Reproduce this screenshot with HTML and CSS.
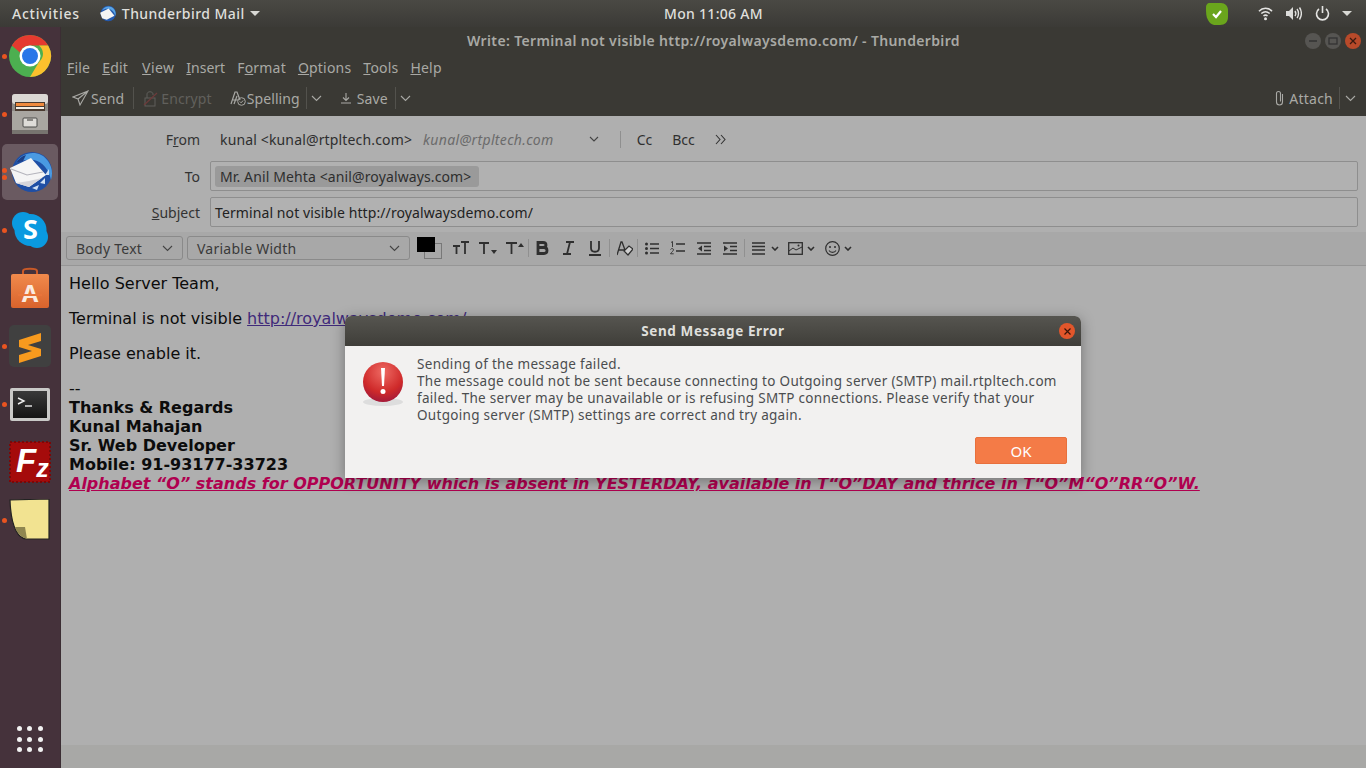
FILE: index.html
```html
<!DOCTYPE html>
<html lang="en">
<head>
<meta charset="utf-8">
<title>Write: Terminal not visible</title>
<link rel="stylesheet" href="styles.css">
</head>
<body>
<header class="topbar">
  <span class="activities">Activities</span>
  <span class="appmenu">
    <svg class="tb-small" viewBox="0 0 44 44" width="17" height="17"><circle cx="24" cy="22" r="20" fill="#2459ad"/><path d="M8 14C14 2 32 0 40 12c3 5 4 10 2 16-2-9-8-16-17-18-6-1-12 0-17 4z" fill="#5aa5e6"/><path d="M3 20l22-11 15 19-20 10-12-4z" fill="#f4f4f4"/></svg>
    Thunderbird Mail <i class="caret"></i>
  </span>
  <span class="clock">Mon 11:06 AM</span>
  <span class="tray">
    <svg class="shield" width="22" height="22" viewBox="0 0 22 22"><path d="M4 0h11c4 0 7 3 7 7v7c0 5-3 8-8 8-7 1-10-1-12-5-2-3-2-8-2-12 0-3 1-5 4-5z" fill="#6aa51c"/><path d="M7 11l3 3 5-6" fill="none" stroke="#fff" stroke-width="2.2"/></svg>
    <svg class="wifi" width="15" height="15" viewBox="0 0 16 15"><g fill="none" stroke="#e4e4e2" stroke-width="1.6"><path d="M1 5c4-4 10-4 14 0"/><path d="M3.5 7.5c3-2.500 6-2.500 9 0"/><path d="M5.800 10c1.500-1 3-1 4.400 0"/></g><circle cx="8" cy="13" r="1.600" fill="#e4e4e2"/></svg>
    <svg class="vol" width="16" height="15" viewBox="0 0 16 15"><path d="M0 5h3l4-4v13l-4-4H0z" fill="#dcdcda"/><g fill="none" stroke="#e4e4e2" stroke-width="1.400"><path d="M9 5c1 1.500 1 3.500 0 5"/><path d="M11 3c2 2.500 2 6.500 0 9"/><path d="M13.500 1.500c2.500 3.500 2.500 8.500 0 12"/></g></svg>
    <svg class="pow" width="15" height="15" viewBox="0 0 15 15"><path d="M4 3a6 6 0 1 0 7 0" fill="none" stroke="#e4e4e2" stroke-width="1.600"/><path d="M7.500 0v7" stroke="#e4e4e2" stroke-width="1.600"/></svg>
    <i class="caret tray-caret"></i>
  </span>
</header>
<div class="desktop">
  <nav class="dock">
    <div class="dock-item"><i class="pip"></i>
      <svg width="44" height="44" viewBox="0 0 44 44"><circle cx="22" cy="22" r="21" fill="#4caf50"/><path d="M22 1a21 21 0 0 1 18.200 10.500H22a10.500 10.500 0 0 0-10 7L3.800 11.500A21 21 0 0 1 22 1z" fill="#e53a2f"/><path d="M40.200 11.500A21 21 0 0 1 22 43l9-15a10.500 10.500 0 0 0 0-16.500z" fill="#fbc02d"/><circle cx="22" cy="22" r="10.500" fill="#fff"/><circle cx="22" cy="22" r="8" fill="#2a76e8"/></svg>
    </div>
    <div class="dock-item"><i class="pip"></i>
      <svg width="38" height="42" viewBox="0 0 38 42"><rect x="1" y="1" width="36" height="40" rx="3" fill="#8d8a86"/><rect x="1" y="1" width="36" height="10" rx="3" fill="#dbd8d4"/><rect x="4" y="9" width="30" height="9" fill="#4a3a30"/><rect x="5" y="10" width="28" height="3" fill="#ef8a3e"/><rect x="5" y="14" width="28" height="2" fill="#f5f0e8"/><rect x="1" y="18" width="36" height="23" fill="#a9a6a1"/><rect x="1" y="37" width="36" height="4" fill="#77746f"/><rect x="12" y="25" width="14" height="9" rx="1" fill="#dedcd8" stroke="#4a4a48"/><rect x="16" y="25" width="6" height="3" fill="#8a8884"/></svg>
    </div>
    <div class="dock-item active"><i class="pip pip-a"></i><i class="pip pip-b"></i>
      <svg width="46" height="44" viewBox="0 0 46 44"><circle cx="25" cy="22" r="20" fill="#1f4fa5"/><path d="M9 13C15 1 33-1 41 11c4 6 5 12 3 19-2-10-8-18-17-20-6-1-13 0-18 3z" fill="#4a9ae2"/><path d="M9 13c2-4 6-7 10-8l-3 6z" fill="#1c3f86"/><path d="M25 38l7-3-2 5zM33 33l5-5 0 6zM38 25l4-6 0 6z" fill="#cfe0f4"/><path d="M3 18l21-10 15 17-17 12-13-4z" fill="#f5f5f5"/><path d="M4 19l16 6 16-3" fill="none" stroke="#b4b4bc" stroke-width="1.200"/><path d="M9 33l13 4 13-9-13 3z" fill="#d5d5da"/></svg>
    </div>
    <div class="dock-item"><i class="pip"></i>
      <svg width="38" height="38" viewBox="0 0 38 38"><circle cx="12" cy="12" r="11" fill="#0a9ae0"/><circle cx="26" cy="26" r="11" fill="#0a9ae0"/><circle cx="19.500" cy="19" r="16" fill="#0a9ae0"/><text class="skype-s" x="19.500" y="28" text-anchor="middle">S</text></svg>
    </div>
    <div class="dock-item">
      <svg width="38" height="44" viewBox="0 0 38 44"><defs><linearGradient id="bag" x1="0" y1="0" x2="0" y2="1"><stop offset="0" stop-color="#f08a4c"/><stop offset="1" stop-color="#d9632c"/></linearGradient></defs><path d="M12 9V5c0-3 14-3 14 0v4" fill="none" stroke="#c95a28" stroke-width="2"/><rect x="0" y="8" width="38" height="34" rx="2" fill="url(#bag)"/><text class="store-a" x="19" y="36" text-anchor="middle">A</text><rect x="7" y="28" width="24" height="2" fill="#e9743a"/></svg>
    </div>
    <div class="dock-item"><i class="pip"></i>
      <svg width="42" height="42" viewBox="0 0 42 42"><rect width="42" height="42" rx="5" fill="#404040"/><path d="M10 15l22-7v8l-13 4 13 4v7l-22 7v-8l13-4-13-4z" fill="#f79a1e"/></svg>
    </div>
    <div class="dock-item"><i class="pip"></i>
      <svg width="40" height="33" viewBox="0 0 40 33"><defs><linearGradient id="term" x1="0" y1="0" x2="0" y2="1"><stop offset="0" stop-color="#3a3a3a"/><stop offset="1" stop-color="#141414"/></linearGradient></defs><rect width="40" height="33" rx="2" fill="#c9c9c7"/><rect x="3" y="3" width="34" height="27" fill="url(#term)"/><path d="M8 10l6 3-6 3" fill="none" stroke="#eee" stroke-width="1.400"/><path d="M15 18h7" stroke="#eee" stroke-width="1.400"/></svg>
    </div>
    <div class="dock-item">
      <svg width="42" height="42" viewBox="0 0 42 42"><rect x="1" y="1" width="40" height="40" fill="#a50b0b" stroke="#7a0808" stroke-width="2" stroke-dasharray="2 2"/><text class="fz-f" x="7" y="31">F<tspan class="fz-z" dy="5">z</tspan></text></svg>
    </div>
    <div class="dock-item"><i class="pip"></i>
      <svg width="42" height="42" viewBox="0 0 42 42"><path d="M1 1l39-1v40H18C10 40 2 30 1 1z" fill="#f2e391" stroke="#222" stroke-width="1.200"/><path d="M6 28l10 0 2 12C12 38 8 34 6 28z" fill="#8f8650"/></svg>
    </div>
    <div class="apps">
      <i></i><i></i><i></i><i></i><i></i><i></i><i></i><i></i><i></i>
    </div>
  </nav>
  <main class="window">
    <div class="titlebar">
      <span class="wintitle">Write: Terminal not visible http://royalwaysdemo.com/ - Thunderbird</span>
      <span class="winbtns">
        <i class="wb"><svg width="10" height="10" viewBox="0 0 10 10"><path d="M1 5h8" stroke="#333" stroke-width="1.500"/></svg></i>
        <i class="wb"><svg width="10" height="10" viewBox="0 0 10 10"><rect x="1" y="2" width="8" height="6" fill="none" stroke="#333" stroke-width="1.300"/></svg></i>
        <i class="wb wb-close"><svg width="10" height="10" viewBox="0 0 10 10"><path d="M2 2l6 6M8 2l-6 6" stroke="#3a1a10" stroke-width="1.300"/></svg></i>
      </span>
    </div>
    <div class="menubar">
      <span><u>F</u>ile</span><span><u>E</u>dit</span><span class="m-view"><u>V</u>iew</span><span class="m-insert"><u>I</u>nsert</span><span>F<u>o</u>rmat</span><span><u>O</u>ptions</span><span><u>T</u>ools</span><span><u>H</u>elp</span>
    </div>
    <div class="toolbar">
      <svg class="ti-send" width="17" height="16" viewBox="0 0 17 16"><path d="M16 1L1 7l5 2 2 6zM16 1L6 9" fill="none" stroke="#a9a9a5" stroke-width="1.100"/></svg>
      <span class="tl tl-send">Send</span><i class="tsep tsep-1"></i>
      <svg class="ti-enc" width="15" height="17" viewBox="0 0 15 17"><rect x="2" y="8" width="10" height="8" fill="none" stroke="#5f5e5a"/><path d="M4 8V4c0-3 6-3 6 0v1" fill="none" stroke="#5f5e5a"/><path d="M1 15L14 3" stroke="#6d3b3b" stroke-width="1.200"/></svg>
      <span class="tl tl-off">Encrypt</span>
      <svg class="ti-spell" width="16" height="16" viewBox="0 0 16 16"><path d="M1 14L5 2h2l3 8M3 10h5M4 14l3-8" fill="none" stroke="#a9a9a5" stroke-width="1.200"/><circle cx="11.500" cy="11.500" r="3.800" fill="none" stroke="#a9a9a5"/><path d="M9.800 11.500l1.300 1.300 2-2.300" fill="none" stroke="#a9a9a5"/></svg>
      <span class="tl tl-spell">Spelling</span><i class="tsep tsep-2"></i>
      <svg class="chev chev-1" width="11" height="7" viewBox="0 0 11 7"><path d="M1 1l4.500 4.500L10 1" fill="none" stroke="#a9a9a5" stroke-width="1.100"/></svg>
      <svg class="ti-save" width="12" height="12" viewBox="0 0 12 12"><path d="M6 1v7M3 5.500L6 8.500l3-3M1 11h10" fill="none" stroke="#a9a9a5" stroke-width="1.100"/></svg>
      <span class="tl tl-save">Save</span><i class="tsep tsep-3"></i>
      <svg class="chev chev-2" width="11" height="7" viewBox="0 0 11 7"><path d="M1 1l4.500 4.500L10 1" fill="none" stroke="#a9a9a5" stroke-width="1.100"/></svg>
      <svg class="ti-clip" width="9" height="16" viewBox="0 0 9 16"><path d="M7.500 4v8a3 3 0 0 1-6 0V3.500a2 2 0 0 1 4 0V11.500" fill="none" stroke="#a9a9a5" stroke-width="1.100"/></svg>
      <span class="tl tl-attach">Attach</span><i class="tsep tsep-4"></i>
      <svg class="chev chev-3" width="11" height="7" viewBox="0 0 11 7"><path d="M1 1l4.500 4.500L10 1" fill="none" stroke="#a9a9a5" stroke-width="1.100"/></svg>
    </div>
    <section class="fields">
      <div class="row row-from">
        <label class="lbl">F<u>r</u>om</label>
        <span class="from-acc">kunal &lt;kunal@rtpltech.com&gt;</span>
        <em class="from-ph">kunal@rtpltech.com</em>
        <svg class="chev from-chev" width="10" height="6" viewBox="0 0 10 6"><path d="M1 1l4 4 4-4" fill="none" stroke="#444" stroke-width="1.100"/></svg>
        <i class="fsep"></i>
        <span class="cc">Cc</span>
        <span class="bcc">Bcc</span>
        <svg class="more" width="11" height="11" viewBox="0 0 11 11"><path d="M1 1l4 4.500L1 10M6 1l4 4.500L6 10" fill="none" stroke="#333" stroke-width="1.100"/></svg>
      </div>
      <div class="row row-to">
        <label class="lbl">To</label>
        <div class="input"><span class="pill">Mr. Anil Mehta &lt;anil@royalways.com&gt;</span></div>
      </div>
      <div class="row row-subj">
        <label class="lbl"><u>S</u>ubject</label>
        <div class="input input-subj">Terminal not visible http://royalwaysdemo.com/</div>
      </div>
    </section>
    <div class="formatbar">
      <div class="sel sel-para">Body Text<svg width="11" height="7" viewBox="0 0 11 7"><path d="M1 1l4.500 4.500L10 1" fill="none" stroke="#444" stroke-width="1.100"/></svg></div>
      <div class="sel sel-font">Variable Width<svg width="11" height="7" viewBox="0 0 11 7"><path d="M1 1l4.500 4.500L10 1" fill="none" stroke="#444" stroke-width="1.100"/></svg></div>
      <div class="colors"><i class="bg"></i><i class="fg"></i></div>
      <svg class="fi fi-size" width="17" height="14" viewBox="0 0 17 14"><path d="M1 5h7M4.500 5v8M9 1h8M13 1v12" stroke="#2f2f2f" stroke-width="1.800" fill="none"/></svg>
      <svg class="fi fi-dn" width="18" height="14" viewBox="0 0 18 14"><path d="M0 2h10M5 2v11" stroke="#2f2f2f" stroke-width="1.800" fill="none"/><path d="M12 9h6l-3 4z" fill="#2f2f2f"/></svg>
      <svg class="fi fi-up" width="18" height="14" viewBox="0 0 18 14"><path d="M0 2h11M5.500 2v11" stroke="#2f2f2f" stroke-width="1.800" fill="none"/><path d="M12 6h6l-3-4z" fill="#2f2f2f"/></svg>
      <i class="fsep2 s1"></i>
      <svg class="fi fi-b" width="13" height="14" viewBox="0 0 13 14"><path d="M2 1.500h5c4 0 4 5 0 5H2zM2 6.500h6c4 0 4 6 0 6H2z" fill="none" stroke="#2f2f2f" stroke-width="2.800"/></svg>
      <svg class="fi fi-i" width="11" height="14" viewBox="0 0 11 14"><path d="M3 1h8M0 13h8M7 1L4 13" stroke="#2f2f2f" stroke-width="1.800" fill="none"/></svg>
      <svg class="fi fi-u" width="12" height="15" viewBox="0 0 12 15"><path d="M2 0v7c0 5 8 5 8 0V0M0 14h12" stroke="#2f2f2f" stroke-width="1.800" fill="none"/></svg>
      <i class="fsep2 s2"></i>
      <svg class="fi fi-e" width="16" height="15" viewBox="0 0 16 15"><path d="M0 14L4 1h1l3 8M2 9h6" stroke="#2f2f2f" stroke-width="1.300" fill="none"/><path d="M7 10l5-5 4 3-5 6z" fill="#cfcfcf" stroke="#2f2f2f" stroke-width="1.200"/></svg>
      <i class="fsep2 s3"></i>
      <svg class="fi fi-ul" width="14" height="13" viewBox="0 0 14 13"><circle cx="1.500" cy="2" r="1.500" fill="#2f2f2f"/><circle cx="1.500" cy="6.500" r="1.500" fill="#2f2f2f"/><circle cx="1.500" cy="11" r="1.500" fill="#2f2f2f"/><path d="M5 2h9M5 6.500h9M5 11h9" stroke="#2f2f2f" stroke-width="1.600"/></svg>
      <svg class="fi fi-ol" width="15" height="14" viewBox="0 0 15 14"><path d="M1 1.500l1.500-1V6M.5 8.500c1-1.500 3-1 3 .3 0 1-2 2.500-3 4h3.200" stroke="#2f2f2f" stroke-width=".9" fill="none"/><path d="M6 3h9M6 10h9" stroke="#2f2f2f" stroke-width="1.600"/></svg>
      <svg class="fi fi-out" width="14" height="13" viewBox="0 0 14 13"><path d="M0 1h14M7 4.500h7M7 8.500h7M0 12h14" stroke="#2f2f2f" stroke-width="1.600"/><path d="M5 3.500v6l-4-3z" fill="#2f2f2f"/></svg>
      <svg class="fi fi-in" width="14" height="13" viewBox="0 0 14 13"><path d="M0 1h14M7 4.500h7M7 8.500h7M0 12h14" stroke="#2f2f2f" stroke-width="1.600"/><path d="M1 3.500v6l4-3z" fill="#2f2f2f"/></svg>
      <i class="fsep2 s4"></i>
      <svg class="fi fi-al" width="13" height="13" viewBox="0 0 13 13"><path d="M0 1h13M0 4.500h13M0 8h13M0 12h13" stroke="#2f2f2f" stroke-width="1.600"/></svg>
      <svg class="fi fc fc1" width="8" height="5" viewBox="0 0 8 5"><path d="M1 1l3 3 3-3" fill="none" stroke="#2f2f2f" stroke-width="1.600"/></svg>
      <svg class="fi fi-img" width="15" height="13" viewBox="0 0 15 13"><rect x=".7" y=".7" width="13.600" height="11.600" fill="none" stroke="#2f2f2f" stroke-width="1.300"/><path d="M1 9l4-3 3 2 6-3" fill="none" stroke="#2f2f2f"/><circle cx="10.500" cy="3.500" r="1" fill="#2f2f2f"/></svg>
      <svg class="fi fc fc2" width="8" height="5" viewBox="0 0 8 5"><path d="M1 1l3 3 3-3" fill="none" stroke="#2f2f2f" stroke-width="1.600"/></svg>
      <svg class="fi fi-sm" width="15" height="15" viewBox="0 0 15 15"><circle cx="7.500" cy="7.500" r="6.800" fill="none" stroke="#2f2f2f" stroke-width="1.200"/><circle cx="5" cy="6" r="1" fill="#2f2f2f"/><circle cx="10" cy="6" r="1" fill="#2f2f2f"/><path d="M4 9.500c1.500 2.500 5.500 2.500 7 0" fill="none" stroke="#2f2f2f" stroke-width="1.100"/></svg>
      <svg class="fi fc fc3" width="8" height="5" viewBox="0 0 8 5"><path d="M1 1l3 3 3-3" fill="none" stroke="#2f2f2f" stroke-width="1.600"/></svg>
    </div>
    <article class="message">
      <p class="para">Hello Server Team,</p>
      <p class="para">Terminal is not visible <a class="link">http://royalwaysdemo.com/</a></p>
      <p class="para">Please enable it.</p>
      <p class="sig">--</p>
      <p class="sig strong">Thanks &amp; Regards</p>
      <p class="sig strong">Kunal Mahajan</p>
      <p class="sig strong">Sr. Web Developer</p>
      <p class="sig strong">Mobile: 91-93177-33723</p>
      <p class="sig motto">Alphabet “O” stands for OPPORTUNITY which is absent in YESTERDAY, available in T“O”DAY and thrice in T“O”M“O”RR“O”W.</p>
    </article>
    <footer class="status"></footer>
  </main>
</div>
<div class="dialog" role="alertdialog">
  <div class="dlg-title">
    <span>Send Message Error</span>
    <i class="dlg-close"><svg width="9" height="9" viewBox="0 0 9 9"><path d="M1.500 1.500l6 6M7.500 1.500l-6 6" stroke="#3a1408" stroke-width="1.200"/></svg></i>
  </div>
  <div class="dlg-body">
    <svg class="err" width="42" height="46" viewBox="0 0 42 46"><defs><radialGradient id="r" cx=".5" cy=".25" r=".85"><stop offset="0" stop-color="#ee6a63"/><stop offset=".6" stop-color="#cf2a2a"/><stop offset="1" stop-color="#93133f"/></radialGradient></defs><ellipse cx="21" cy="41" rx="20" ry="4" fill="#ddd"/><circle cx="21" cy="21" r="20" fill="url(#r)"/><path d="M19 7h4l-1 18h-2z" fill="#fff"/><circle cx="21" cy="30.500" r="2.500" fill="#fff"/></svg>
    <div class="dlg-text">Sending of the message failed.<br>The message could not be sent because connecting to Outgoing server (SMTP) mail.rtpltech.com<br>failed. The server may be unavailable or is refusing SMTP connections. Please verify that your<br>Outgoing server (SMTP) settings are correct and try again.</div>
  </div>
  <div class="dlg-actions"><button class="ok">OK</button></div>
</div>
</body>
</html>
```
FILE: styles.css
```css
* { box-sizing: border-box; }
html, body { margin: 0; height: 100%; overflow: hidden; }
body { width: 1366px; height: 768px; display: flex; flex-direction: column; font-family: "Noto Sans", "Open Sans", sans-serif; position: relative; background: #afafaf; }
i { display: block; font-style: normal; }

.topbar { height: 27px; flex: none; display: flex; align-items: center; background: linear-gradient(#4a4944, #3b3a36); color: #dfdfdb; font-size: 14px; font-weight: 500; position: relative; }
.activities { margin-left: 12px; letter-spacing: .75px; }
.appmenu { margin-left: 19px; display: flex; align-items: center; gap: 5px; letter-spacing: .45px; }
.tb-small { margin-right: 1px; }
.caret { width: 0; height: 0; border-left: 5px solid transparent; border-right: 5px solid transparent; border-top: 5px solid #d8d8d4; margin-left: 0; }
.clock { position: absolute; left: 664px; letter-spacing: .3px; }
.tray { margin-left: auto; display: flex; align-items: center; }
.shield { margin-right: 30px; }
.wifi { margin-right: 13px; }
.vol { margin-right: 13px; }
.pow { margin-right: 12px; }
.tray-caret { margin: 0 14px 0 0; }

.desktop { flex: 1; display: flex; min-height: 0; }
.dock { width: 61px; flex: none; background: #45323b; display: flex; flex-direction: column; align-items: center; border-right: 1px solid #3b2d33; }
.dock-item { height: 58px; width: 100%; flex: none; display: flex; align-items: center; justify-content: center; position: relative; }
.dock-item.active::before { content: ""; position: absolute; left: 2px; top: 1px; width: 56px; height: 56px; border-radius: 5px; background: #6a5a61; }
.dock-item svg { position: relative; margin-right: 1px; }
.pip { position: absolute; left: 2px; top: 27px; width: 5px; height: 5px; border-radius: 50%; background: #e95420; z-index: 1; }
.pip-a { top: 25px; }
.pip-b { top: 32px; }
.skype-s { font: 700 27px "Open Sans", sans-serif; fill: #fff; }
.store-a { font: 700 24px "Noto Sans", sans-serif; fill: #fbeadf; }
.fz-f { font: italic 700 33px "Liberation Sans", sans-serif; fill: #fff; }
.fz-z { font-size: 25px; }
.apps { margin-top: auto; margin-bottom: 16px; margin-right: 1px; display: grid; grid-template-columns: repeat(3, 5px); gap: 5.5px; }
.apps i { width: 5px; height: 5px; border-radius: 50%; background: #f2f2f2; }

.window { flex: 1; min-width: 0; display: flex; flex-direction: column; background: #afafaf; }
.titlebar { height: 28px; flex: none; background: #3a3934; display: flex; align-items: center; justify-content: center; position: relative; padding-bottom: 2px; }
.wintitle { font-size: 14px; font-weight: 600; color: #a9a9a5; letter-spacing: .36px; }
.winbtns { position: absolute; right: 5px; top: 6px; display: flex; gap: 4px; }
.wb { width: 16px; height: 16px; border-radius: 50%; background: #565552; display: flex; align-items: center; justify-content: center; }
.wb-close { background: #b84a2a; }

.menubar { height: 25px; flex: none; background: #3a3934; display: flex; align-items: center; padding-left: 6px; gap: 12px; color: #a9a9a5; font-size: 14px; letter-spacing: .2px; }
.m-view { margin-left: 2px; letter-spacing: .4px; }
.m-insert { letter-spacing: 0; }
.toolbar { height: 36px; flex: none; background: #3a3934; display: flex; align-items: center; color: #a9a9a5; font-size: 14px; letter-spacing: .1px; padding-left: 11px; }
.tl-off { color: #61605c; margin-left: 3px; }
.tl-send { margin-left: 2px; }
.tsep { width: 1px; height: 22px; background: #53524d; }
.tsep-1 { margin-left: 9px; }
.ti-enc { margin-left: 9px; }
.ti-spell { margin-left: 18px; }
.tl-spell { margin-left: 1px; }
.tsep-2 { margin-left: 6px; }
.chev-1 { margin-left: 4px; }
.ti-save { margin-left: 18px; }
.tl-save { margin-left: 5px; }
.tsep-3 { margin-left: 7px; }
.chev-2 { margin-left: 4px; }
.ti-clip { margin-left: auto; }
.tl-attach { margin-left: 5px; letter-spacing: .25px; }
.tsep-4 { margin-left: 6px; }
.chev-3 { margin: 0 10px 0 5px; }

.fields { height: 116px; flex: none; color: #2f2f2f; font-size: 14px; }
.row { display: flex; align-items: center; }
.lbl { width: 139px; text-align: right; color: #333; }
.row-from { height: 30px; margin-top: 8px; }
.from-acc { margin-left: 20px; color: #2e2e2e; letter-spacing: .15px; }
.from-ph { margin-left: 11px; color: #6b6b6b; font-style: italic; letter-spacing: .33px; }
.from-chev { margin-left: 35px; }
.fsep { width: 1px; height: 17px; background: #8f8f8f; margin-left: 21px; }
.cc { margin-left: 16px; }
.bcc { margin-left: 20px; }
.more { margin-left: 20px; }
.row-to { height: 30px; margin-top: 7px; }
.row-subj { height: 30px; margin-top: 6px; }
.input { margin-left: 10px; width: 1148px; height: 30px; border: 1px solid #8e8e8e; border-radius: 2px; background: #b1b1b1; display: flex; align-items: center; padding-left: 4px; color: #222; letter-spacing: .1px; }
.pill { background: #9a9a9a; height: 21px; width: 264px; border-radius: 3px; padding-left: 5px; display: flex; align-items: center; color: #2e2e2e; letter-spacing: .12px; }

.formatbar { height: 34px; flex: none; background: #a8a8a8; border-bottom: 1px solid #969696; display: flex; align-items: center; padding: 0 0 1px 5px; }
.sel { height: 24px; border: 1px solid #8a8a8a; border-radius: 3px; display: flex; align-items: center; justify-content: space-between; font-size: 14px; color: #3a3a3a; padding: 0 9px; letter-spacing: .25px; }
.sel-para { width: 117px; }
.sel-font { width: 223px; margin-left: 4px; }
.colors { width: 25px; height: 23px; position: relative; margin-left: 7px; }
.colors .bg { position: absolute; left: 7px; top: 6px; width: 18px; height: 16px; border: 1px solid #787878; background: #a8a8a8; }
.colors .fg { position: absolute; left: 0; top: 0; width: 18px; height: 15px; background: #000; }
.fi { flex: none; }
.fi-size { margin-left: 10px; }
.fi-dn { margin-left: 10px; }
.fi-up { margin-left: 9px; }
.fsep2 { width: 1px; height: 18px; background: #909090; }
.s1 { margin-left: 4px; }
.fi-b { margin-left: 7px; }
.fi-i { margin-left: 14px; }
.fi-u { margin-left: 15px; }
.s2 { margin-left: 8px; }
.fi-e { margin-left: 7px; }
.s3 { margin-left: 4px; }
.fi-ul { margin-left: 7px; }
.fi-ol { margin-left: 11px; }
.fi-out { margin-left: 12px; }
.fi-in { margin-left: 12px; }
.s4 { margin-left: 7px; }
.fi-al { margin-left: 7px; }
.fc1 { margin-left: 6px; }
.fi-img { margin-left: 9px; }
.fc2 { margin-left: 4px; }
.fi-sm { margin-left: 10px; }
.fc3 { margin-left: 4px; }

.message { flex: 1; min-height: 0; background: #afafaf; padding: 8px 0 0 8px; font-family: "DejaVu Sans", sans-serif; font-size: 16px; color: #0c0c0c; }
.message p { margin: 0; }
.para { height: 19px; line-height: 19px; margin-bottom: 16px !important; }
.sig { height: 19px; line-height: 19px; white-space: nowrap; }
.strong { font-weight: 700; }
.link { color: #3f2a7a; text-decoration: underline; }
.motto { font-weight: 700; font-style: italic; text-decoration: underline; color: #b0004f; }
.status { height: 23px; flex: none; background: #a8a8a6; }

.dialog { position: absolute; left: 345px; top: 316px; width: 736px; height: 162px; background: #f2f1f0; border-radius: 6px 6px 0 0; box-shadow: 0 3px 14px rgba(0,0,0,.35); display: flex; flex-direction: column; }
.dlg-title { height: 30px; flex: none; background: linear-gradient(#565550, #3f3e39); border-radius: 6px 6px 0 0; display: flex; align-items: center; justify-content: center; color: #dfdfdb; font-size: 13.500px; font-weight: 700; letter-spacing: .6px; position: relative; }
.dlg-close { position: absolute; right: 6px; top: 7px; width: 16px; height: 16px; border-radius: 50%; background: #e2562b; display: flex; align-items: center; justify-content: center; }
.dlg-body { display: flex; flex: none; height: 91px; padding: 10px 0 0 17px; }
.err { margin-top: 5px; }
.dlg-text { margin-left: 13px; font-size: 13.500px; line-height: 17px; color: #4b4d4f; letter-spacing: .3px; white-space: nowrap; }
.dlg-actions { display: flex; justify-content: flex-end; padding-right: 14px; }
.ok { width: 92px; height: 27px; border: 1px solid #e8703c; border-radius: 2px; background: #f47b47; color: #fff; font: 15px "Noto Sans", sans-serif; padding: 0; }
```
